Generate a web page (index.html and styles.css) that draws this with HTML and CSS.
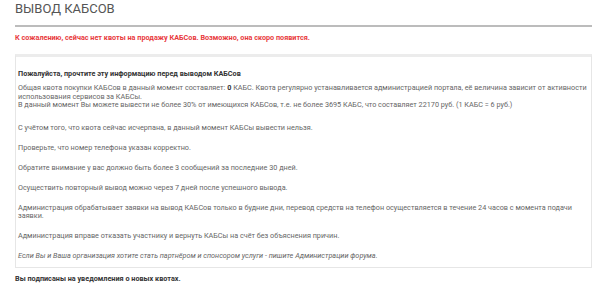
FILE: index.html
```html
<!DOCTYPE html>
<html lang="ru">
<head>
    <meta charset="UTF-8">
    <meta name="viewport" content="width=device-width, initial-scale=1.0">
    <title>Вывод КАБСов</title>
    <link rel="stylesheet" href="styles.css">
</head>
<body>

<div class="page">
    <!-- Title -->
    <h1 class="page-title">ВЫВОД КАБСОВ</h1>

    <p class="quota-alert">К сожалению, сейчас нет квоты на продажу КАБСов. Возможно, она скоро появится.</p>

    <!-- Info block -->
    <div class="info-box">
        <h2 class="info-title">Пожалуйста, прочтите эту информацию перед выводом КАБСов</h2>

        <p class="quota-info">Общая квота покупки КАБСов в данный момент составляет: <b>0</b> КАБС. Квота регулярно устанавливается администрацией портала, её величина зависит от активности использования сервисов за КАБСы.<br>
        В данный момент Вы можете вывести не более 30% от имеющихся КАБСов, т.е. не более 3695 КАБС, что составляет 22170 руб. (1 КАБС = 6 руб.)</p>

        <p>С учётом того, что квота сейчас исчерпана, в данный момент КАБСы вывести нельзя.</p>

        <p>Проверьте, что номер телефона указан корректно.</p>

        <p>Обратите внимание у вас должно быть более 3 сообщений за последние 30 дней.</p>

        <p>Осуществить повторный вывод можно через 7 дней после успешного вывода.</p>

        <p>Администрация обрабатывает заявки на вывод КАБСов только в будние дни, перевод средств на телефон осуществляется в течение 24 часов с момента подачи заявки.</p>

        <p>Администрация вправе отказать участнику и вернуть КАБСы на счёт без объяснения причин.</p>

        <p class="partner-note">Если Вы и Ваша организация хотите стать партнёром и спонсором услуги - пишите Администрации форума.</p>
    </div>

    <p class="subscribe-note">Вы подписаны на уведомления о новых квотах.</p>
</div>

</body>
</html>
```

FILE: styles.css
```css
body {
  font-family: Roboto, "Liberation Sans", sans-serif;
  background-color: #fff;
  margin: 0;
  padding: 0;
}

.page {
  padding: 0 8px 0 15px;
}

/* Title */
.page-title {
  margin: 0;
  padding: 1px 0 9px;
  font-size: 13px;
  line-height: 15px;
  font-weight: 400;
  color: #555;
  border-bottom: 2px solid #bcbcbc;
}

.quota-alert {
  margin: 6px 0 0;
  font-size: 7.25px;
  line-height: 9px;
  font-weight: bold;
  color: #e8393c;
}

/* Info block */
.info-box {
  margin-top: 12px;
  padding: 12px 2px 6px;
  border: 1px solid #e6e6e6;
  border-top: 3px solid #ececec;
  color: #666;
  font-size: 7.25px;
  line-height: 8.5px;
}

.info-title {
  margin: 0 0 6px;
  font-size: 7.25px;
  line-height: 9px;
  font-weight: bold;
  color: #333;
}

.info-box p {
  margin: 0 0 11.5px;
}

.info-box .quota-info {
  margin-bottom: 14px;
}

.info-box p:last-child {
  margin-bottom: 0;
}

.info-box p b {
  color: #333;
}

.info-box .partner-note {
  font-style: italic;
}

.subscribe-note {
  margin: 6px 0 0;
  font-size: 7.25px;
  line-height: 9px;
  font-weight: bold;
  color: #333;
}
```
